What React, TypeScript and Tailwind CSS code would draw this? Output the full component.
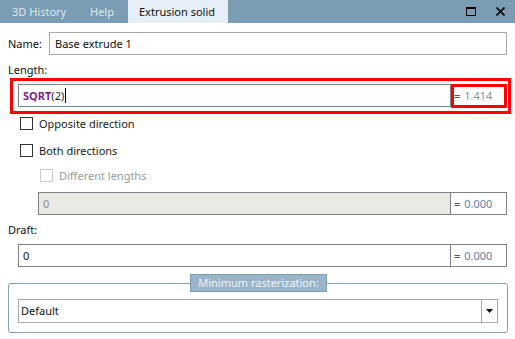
import React from 'react';

const font = { fontFamily: '"Noto Sans", "Open Sans", sans-serif' };

const Check: React.FC<{ label: string; disabled?: boolean }> = ({ label, disabled }) => (
  <label className="flex items-center h-[13px] gap-[6px] select-none">
    <span
      className={`w-[13px] h-[13px] border bg-white shrink-0 ${disabled ? 'border-[#cccccc]' : 'border-[#333333]'}`}
    />
    <span className={disabled ? 'text-[#9a9a9a]' : 'text-[#1a1a1a]'}>{label}</span>
  </label>
);

const ValueRow: React.FC<{
  value: React.ReactNode;
  result: string;
  disabled?: boolean;
  className?: string;
  resultClass?: string;
}> = ({ value, result, disabled, className = '', resultClass = 'text-[#5b82ad]' }) => (
  <div className={`flex h-[23px] ${className}`}>
    <div
      className={`flex-1 flex items-center border border-[#7e8188] px-[4px] ${
        disabled ? 'bg-[#ebe9e3] text-[#8a8a8a]' : 'bg-white text-[#111]'
      }`}
    >
      {value}
    </div>
    <div className="w-[56px] flex items-center border border-l-0 border-[#7e8188] bg-white pl-[3px]">
      <span className="text-[#555] mr-[4px]">=</span>
      <span className={resultClass}>{result}</span>
    </div>
  </div>
);

export default function App() {
  return (
    <div className="w-[515px] h-[339px] bg-white text-[11px] leading-[16px] overflow-hidden" style={font}>
      {/* title bar */}
      <div className="h-[23px] bg-[#7a9db3] flex items-stretch">
        <div className="w-[78px] pl-[12px] flex items-center text-[#dde7ee]">3D History</div>
        <div className="w-[50px] pl-[12px] flex items-center text-[#dde7ee]">Help</div>
        <div className="w-[100px] pl-[11px] flex items-center bg-[#e6eff7] text-[#111]">Extrusion solid</div>
        <div className="flex-1" />
        <div className="flex items-center gap-[20px] pr-[10px]">
          <span className="w-[10px] h-[9px] border border-black border-t-2" />
          <svg width="9" height="9" viewBox="0 0 9 9" className="mt-[-1px]">
            <path d="M0.5 0.5 L8.5 8.5 M8.5 0.5 L0.5 8.5" stroke="#000" strokeWidth="1.6" />
          </svg>
        </div>
      </div>

      <div className="flex flex-col">
        {/* name */}
        <div className="flex items-center mt-[9px] h-[23px] pl-[8px] pr-[8px]">
          <span className="w-[41px] text-[#111]">Name:</span>
          <div className="flex-1 h-[23px] flex items-center border border-[#ababab] px-[5px] text-[#111]">
            Base extrude 1
          </div>
        </div>

        <div className="mt-[7px] pl-[8px] text-[#111]">Length:</div>

        {/* length with annotation */}
        <div className="relative mt-[6px] ml-[18px] mr-[8px]">
          <ValueRow
            value={
              <span className="flex items-center">
                <span className="font-bold text-[#7b1f7f]">SQRT</span>
                <span className="text-[#222]">(2)</span>
                <span className="w-px h-[15px] bg-black ml-px" />
              </span>
            }
            result="1.414"
            resultClass="text-[#8f8f9f]"
          />
          <div className="absolute left-[-8px] top-[-6px] right-[-4px] bottom-[-7px] border-[3px] border-[#ff0000] pointer-events-none" />
          <div className="absolute right-[0px] top-[0px] w-[56px] h-[24px] border-[3px] border-[#ff0000] pointer-events-none" />
        </div>

        <div className="mt-[10px] ml-[20px]">
          <Check label="Opposite direction" />
        </div>
        <div className="mt-[14px] ml-[20px]">
          <Check label="Both directions" />
        </div>
        <div className="mt-[12px] ml-[40px]">
          <Check label="Different lengths" disabled />
        </div>

        <ValueRow value="0" result="0.000" disabled className="mt-[10px] ml-[38px] mr-[8px]" />

        <div className="mt-[7px] pl-[8px] text-[#111]">Draft:</div>
        <ValueRow value="0" result="0.000" className="mt-[6px] ml-[18px] mr-[8px]" />

        {/* group */}
        <div className="relative mt-[16px] ml-[8px] w-[500px] h-[50px] border border-[#7fa2b8] rounded-[3px] pt-[15px] px-[9px]">
          <div className="absolute left-[181px] top-[-10px] w-[137px] h-[18px] bg-[#9ab5c9] border border-[#7b9cb1] text-[#eef3f7] flex items-center justify-center">
            Minimum rasterization:
          </div>
          <div className="flex h-[24px] border border-[#ababab] bg-white">
            <div className="flex-1 flex items-center pl-[2px] text-[#111]">Default</div>
            <div className="w-[16px] border-l border-[#ababab] flex items-center justify-center">
              <svg width="7" height="4" viewBox="0 0 7 4">
                <path d="M0 0 H7 L3.5 4 Z" fill="#111" />
              </svg>
            </div>
          </div>
        </div>
      </div>
    </div>
  );
}
